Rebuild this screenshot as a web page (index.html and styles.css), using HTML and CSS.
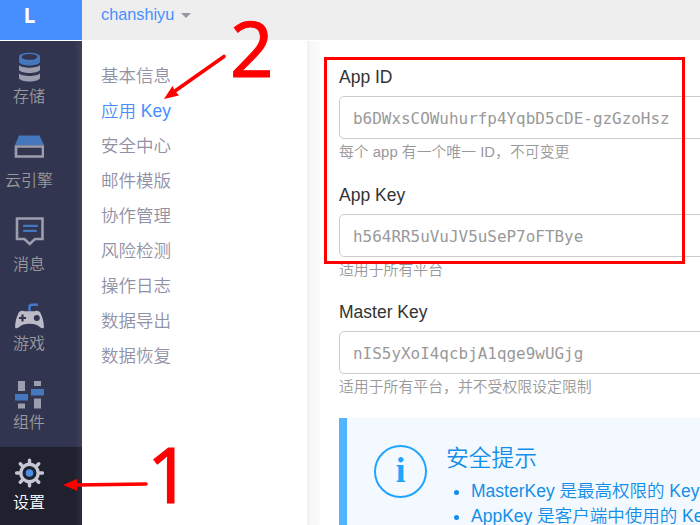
FILE: index.html
```html
<!DOCTYPE html>
<html lang="zh-CN">
<head>
<meta charset="utf-8">
<title>应用 Key</title>
<link rel="stylesheet" href="styles.css">
</head>
<body>
<div class="app">
  <header class="top">
    <div class="brand">L</div>
    <div class="crumb"><span>chanshiyu</span><i class="caret"></i></div>
  </header>
  <div class="main">
    <nav class="side">
      <a class="item storage">
        <svg width="30" height="30" viewBox="0 0 30 30">
          <path d="M5 21.300c3 3.600 18 3.600 21 0v5c-2.500 4.300-18.500 4.300-21 0z" fill="#9d9db0"/>
          <path d="M5 13c3 3.600 18 3.600 21 0v5c-2.500 4-18.500 4-21 0z" fill="#9d9db0"/>
          <path d="M5 4.500C6-.5 25-.5 26 4.500v5.700c-3 4.300-18 4.300-21 0z" fill="#4477bb"/>
          <ellipse cx="15.500" cy="4.900" rx="7.800" ry="2.900" fill="#32354f"/>
        </svg>
        <span>存储</span>
      </a>
      <a class="item engine">
        <svg width="30" height="24" viewBox="0 0 30 24">
          <path d="M5 .5h20.500l4.500 9.500H1z" fill="#4477bb"/>
          <path d="M2 11.500h27v10h-27z" fill="none" stroke="#9d9db0" stroke-width="2.600"/>
        </svg>
        <span>云引擎</span>
      </a>
      <a class="item message">
        <svg width="30" height="29" viewBox="0 0 30 29">
          <path d="M3 1.500h25.500v20.500h-7.500L15.700 27l-5.300-5H3z" fill="none" stroke="#9d9db0" stroke-width="2.600"/>
          <path d="M10 8.900h13M10 13.900h12" stroke="#4477bb" stroke-width="2.300" stroke-linecap="round"/>
        </svg>
        <span>消息</span>
      </a>
      <a class="item game">
        <svg width="30" height="26" viewBox="-.5 0 30 26">
          <path d="M15 8.500V4Q15 1.700 17.500 1.700H23.500" fill="none" stroke="#4477cc" stroke-width="2.500"/>
          <path d="M9.500 8.200h11c2.500-.8 4.500-.2 5.700 2.300 2 4 3.200 9 3.200 13.200 0 2-2 1.700-3.400.8-3-2.700-6.500-3.700-11-3.700s-8 1-11 3.700c-1.400.9-3.400 1.200-3.400-.8 0-4.200 1.200-9.200 3.200-13.200 1.200-2.500 3.200-3.100 5.700-2.300z" fill="#bcbcc8"/>
          <path d="M8 11.500v7M4.500 15h7" stroke="#32354f" stroke-width="2.200"/>
          <circle cx="22.300" cy="15" r="3" fill="#32354f"/>
        </svg>
        <span>游戏</span>
      </a>
      <a class="item component">
        <svg width="30" height="29" viewBox="0 0 30 29">
          <path d="M4 1h7v10H4zM4 23.500h7v5H4zM20 1h7v5h-7zM20 18.500h7v10h-7z" fill="#9d9db0"/>
          <path d="M1 14h13v6.500H1zM17 9h13v6.500H17z" fill="#4477bb"/>
        </svg>
        <span>组件</span>
      </a>
      <a class="item setting active">
        <svg width="30" height="30" viewBox="-15.500 -15 30 30">
          <g stroke="#c6c6d4" stroke-width="3.400" stroke-linecap="round">
            <path d="M0-12.900V-10M0 12.900V10M-12.900 0H-10M12.900 0H10M-9.200-9.200L-7.500-7.500M9.200 9.200L7.500 7.500M-9.200 9.200L-7.500 7.500M9.200-9.200L7.500-7.500"/>
          </g>
          <circle r="8.700" fill="none" stroke="#c6c6d4" stroke-width="3.400"/>
          <circle r="3.800" fill="#4a90e2"/>
        </svg>
        <span>设置</span>
      </a>
    </nav>
    <nav class="menu">
      <a>基本信息</a>
      <a class="current">应用 Key</a>
      <a>安全中心</a>
      <a>邮件模版</a>
      <a>协作管理</a>
      <a>风险检测</a>
      <a>操作日志</a>
      <a>数据导出</a>
      <a>数据恢复</a>
    </nav>
    <main class="content">
      <section class="field">
        <h4>App ID</h4>
        <div class="box">b6DWxsCOWuhurfp4YqbD5cDE-gzGzoHsz</div>
        <p>每个 app 有一个唯一 ID，不可变更</p>
      </section>
      <section class="field">
        <h4>App Key</h4>
        <div class="box">h564RR5uVuJV5uSeP7oFTBye</div>
        <p>适用于所有平台</p>
      </section>
      <section class="field">
        <h4>Master Key</h4>
        <div class="box">nIS5yXoI4qcbjA1qge9wUGjg</div>
        <p>适用于所有平台，并不受权限设定限制</p>
      </section>
      <section class="callout">
        <div class="info">i</div>
        <div class="tips">
          <h3>安全提示</h3>
          <ul>
            <li>MasterKey 是最高权限的 Key</li>
            <li>AppKey 是客户端中使用的 Key</li>
          </ul>
        </div>
      </section>
    </main>
  </div>
  <div class="frame"></div>
  <svg class="arrows" width="700" height="525" viewBox="0 0 700 525">
    <g stroke="#f00" stroke-width="3.600" stroke-linecap="round">
      <path d="M224 56.500L175 91"/>
      <path d="M146 484L76 485"/>
    </g>
    <path d="M164 99L172.500 86L175 91L179 95.500Z" fill="#f00"/>
    <path d="M63 485L77.500 478.700L76.500 485L77.500 491Z" fill="#f00"/>
  </svg>
  <div class="num two">2</div>
  <div class="num one">1</div>
</div>
</body>
</html>
```
FILE: styles.css
```css
* { box-sizing: border-box; }
body {
  margin: 0;
  background: #fff;
  font-family: "Liberation Sans", "Noto Sans CJK SC", sans-serif;
  font-size: 17.5px;
  font-weight: 350;
}
h3, h4, p, ul { margin: 0; padding: 0; font-weight: 350; }
.app {
  position: relative;
  width: 700px;
  height: 525px;
  overflow: hidden;
  display: flex;
  flex-direction: column;
}
.top { display: flex; height: 40px; margin-bottom: 1px; flex: none; background: #eee; }
.brand {
  width: 82px;
  padding-right: 23px;
  background: #478eff;
  color: #fff;
  font: 700 21px/30px "Open Sans", sans-serif;
  text-align: center;
}
.crumb {
  display: flex;
  padding-left: 19px;
  color: #478eff;
  font-size: 16.300px;
  line-height: 29px;
}
.caret {
  margin: 13px 0 0 7px;
  width: 0;
  height: 0;
  border: 5px solid transparent;
  border-top-color: #9696a3;
  border-bottom: 0;
}
.main { display: flex; flex: 1; min-height: 0; }
.side {
  display: flex;
  flex-direction: column;
  flex: none;
  width: 82px;
  background: linear-gradient(90deg, #32354f 74px, #3f4159 82px);
}
.item {
  display: flex;
  flex-direction: column;
  align-items: center;
  justify-content: flex-end;
  padding: 0 24px 13px 0;
  color: #99999c;
  font-size: 16px;
  line-height: 20px;
}
.item svg { display: block; flex: none; }
.item span { white-space: nowrap; }
.storage { height: 79px; }
.storage svg { margin-bottom: 5px; }
.engine { height: 84px; }
.engine svg { margin-bottom: 12px; }
.message { height: 84px; }
.message svg { margin-bottom: 9px; }
.game { height: 79px; }
.game svg { margin-bottom: 5px; }
.component { height: 80px; padding-bottom: 14px; }
.component svg { margin-bottom: 4px; }
.setting { height: 78px; padding-bottom: 12px; }
.setting svg { margin-bottom: 5px; }
.active { background: linear-gradient(90deg, #20212f 74px, #2c2d3c 82px); color: #fff; }
.menu {
  display: flex;
  flex-direction: column;
  flex: none;
  width: 225px;
  padding: 18px 0 0 19px;
  color: #9191a6;
  line-height: 35px;
}
.current { color: #478eff; }
.content {
  flex: 1;
  min-width: 0;
  padding: 25px 0 0 32px;
  background: linear-gradient(90deg, #f0f0f0, #f8f8f8 4px, #fafafa 12px, #fff 13px);
}
.field { width: 400px; height: 117.500px; }
.field h4 { height: 30px; line-height: 22px; color: #333; }
.box {
  height: 43px;
  padding-left: 13px;
  border: 1px solid #ccc;
  border-radius: 5px;
  background: #fff;
  color: #999;
  font: 15.950px/43px "DejaVu Sans Mono", monospace;
}
.field p { color: #999; font-size: 14.875px; line-height: 26px; white-space: nowrap; }
.callout {
  display: flex;
  width: 400px;
  height: 140px;
  margin-top: -.5px;
  padding: 27px 0 0 27px;
  border-left: 8px solid #50b4ff;
  background: #f4f9ff;
  color: #128ee8;
}
.info {
  flex: none;
  width: 53px;
  height: 53px;
  border: 2px solid #20a5ff;
  border-radius: 50%;
  color: #20a5ff;
  font: 700 35px/48px "Liberation Serif", serif;
  text-align: center;
}
.tips { padding-left: 19px; white-space: nowrap; }
.tips h3 { height: 34px; font-size: 22.750px; line-height: 26px; }
.tips ul { padding-left: 25px; line-height: 25px; }
.frame {
  position: absolute;
  left: 324px;
  top: 57px;
  width: 361px;
  height: 207px;
  border: 3px solid #f00;
}
.arrows { position: absolute; left: 0; top: 0; }
.num {
  position: absolute;
  color: #f00;
  font: 400 76px/80px "Noto Sans", sans-serif;
  -webkit-text-stroke: 1px #f00;
}
.two { left: 230px; top: 8px; }
.one { left: 147px; top: 434px; }
```
